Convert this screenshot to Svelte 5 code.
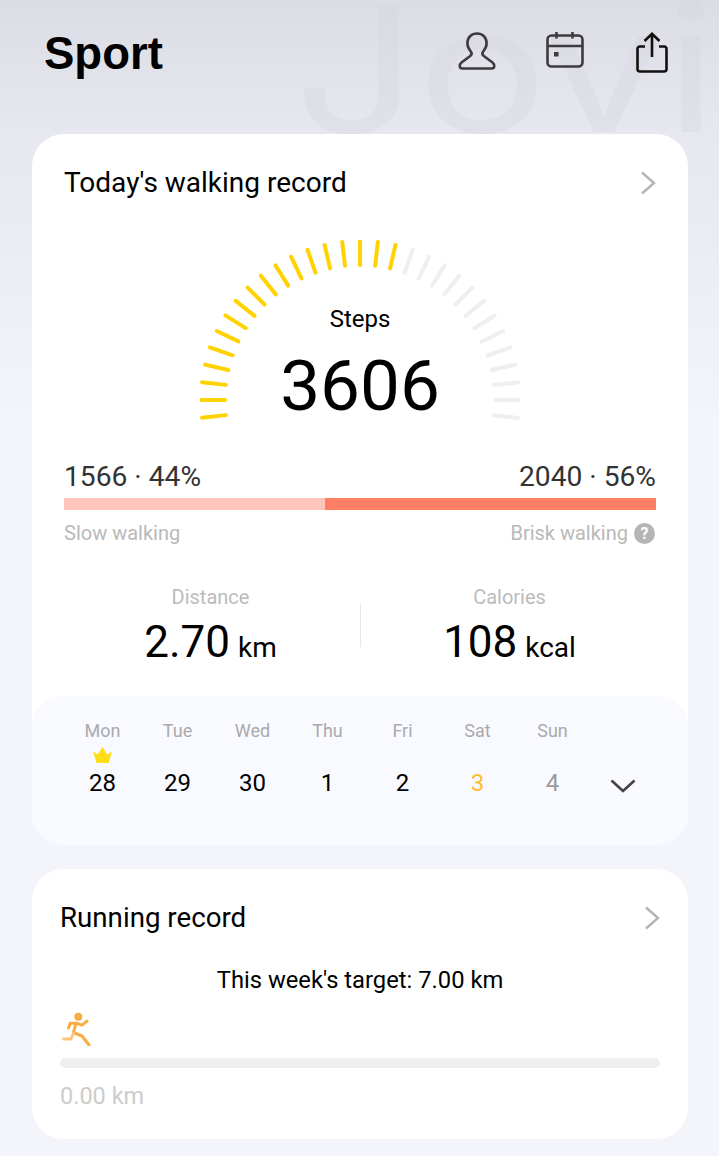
<script>
	const total = 31;
	const filled = 18;
	const cx = 160;
	const cy = 160;
	const ticks = Array.from({ length: total }, (_, i) => {
		const a = ((-6.43 + i * 6.43) * Math.PI) / 180;
		return {
			x1: cx - 159 * Math.cos(a),
			y1: cy - 159 * Math.sin(a),
			x2: cx - 135 * Math.cos(a),
			y2: cy - 135 * Math.sin(a),
			on: i < filled
		};
	});

	const days = [
		{ label: 'Mon', num: '28', crown: true },
		{ label: 'Tue', num: '29' },
		{ label: 'Wed', num: '30' },
		{ label: 'Thu', num: '1' },
		{ label: 'Fri', num: '2' },
		{ label: 'Sat', num: '3', kind: 'today' },
		{ label: 'Sun', num: '4', kind: 'future' }
	];
</script>

<main class="page">
	<div class="watermark" aria-hidden="true">Jovi</div>

	<header class="header">
		<h1>Sport</h1>
		<div class="actions">
			<svg width="38" height="38" viewBox="0 0 38 38" fill="none" stroke="#3c3c3e" stroke-width="2.6">
				<path d="M19 1.500c-5.800 0-9.600 4-9.600 9.800 0 3.600 1.700 6.200 3.400 8.200 1.200 1.500 1 3.200-.6 4.500L3.500 30.500c-2.600 2.200-2.400 6 1 6h29c3.400 0 3.600-3.800 1-6l-8.700-6.500c-1.600-1.300-1.800-3-.6-4.500 1.700-2 3.400-4.600 3.400-8.200 0-5.800-3.800-9.800-9.600-9.800z" />
			</svg>
			<svg width="38" height="36" viewBox="0 0 38 36" fill="none" stroke="#3c3c3e" stroke-width="2.6">
				<rect x="1.500" y="3.500" width="35" height="31" rx="4" />
				<path d="M1.500 14h35M10.500 0v6.500M26.500 0v6.500" />
				<rect x="8" y="20" width="4.500" height="4.500" fill="#3c3c3e" stroke="none" />
			</svg>
			<svg class="ic-share" width="32" height="41" viewBox="0 0 32 41" fill="none" stroke="#111" stroke-width="2.6">
				<path d="M9 14.500H4c-1.500 0-2.500 1-2.500 2.500v20c0 1.500 1 2.500 2.500 2.500h24c1.500 0 2.500-1 2.500-2.500V17c0-1.500-1-2.500-2.500-2.500h-5" />
				<path d="M16 25V2M8.500 9 16 1.800 23.500 9" />
			</svg>
		</div>
	</header>

	<section class="card walking">
		<div class="title-row">
			<h2>Today's walking record</h2>
			<svg width="16" height="24" viewBox="0 0 16 24" fill="none" stroke="#b4b4b4" stroke-width="2.400"><path d="M2 1.500 14 12 2 22.500" /></svg>
		</div>

		<div class="gauge">
			<svg width="320" height="180" viewBox="0 0 320 180">
				{#each ticks as t}
					<line x1={t.x1} y1={t.y1} x2={t.x2} y2={t.y2} stroke={t.on ? '#ffd200' : '#eeeef3'} stroke-width="4" stroke-linecap="round" />
				{/each}
			</svg>
			<div class="gauge-text">
				<div class="steps-label">Steps</div>
				<div class="steps">3606</div>
			</div>
		</div>

		<div class="split">
			<div class="split-nums"><span>1566 · 44%</span><span>2040 · 56%</span></div>
			<div class="split-bar">
				<div class="slow" style="width: 44.1%"></div>
				<div class="brisk"></div>
			</div>
			<div class="split-labels">
				<span>Slow walking</span>
				<span class="brisk-label">Brisk walking <i class="help">?</i></span>
			</div>
		</div>

		<div class="stats">
			<div class="stat">
				<div class="stat-label">Distance</div>
				<div class="stat-value">2.70 <small>km</small></div>
			</div>
			<div class="divider"></div>
			<div class="stat">
				<div class="stat-label">Calories</div>
				<div class="stat-value">108 <small>kcal</small></div>
			</div>
		</div>

		<div class="week">
			{#each days as d}
				<div class="day {d.kind ?? ''}">
					<div class="day-label">{d.label}</div>
					<div class="crown">
						{#if d.crown}
							<svg width="19" height="16" viewBox="0 0 19 16"><path d="M3.500 16 0 4.500l4.800 3L9.500 0l4.700 7.500 4.800-3L15.500 16z" fill="#ffdd17" /></svg>
						{/if}
					</div>
					<div class="day-num">{d.num}</div>
				</div>
			{/each}
			<div class="week-more">
				<svg width="26" height="14" viewBox="0 0 26 14" fill="none" stroke="#444" stroke-width="2.600"><path d="M1.500 1.500 13 12 24.500 1.500" /></svg>
			</div>
		</div>
	</section>

	<section class="card running">
		<div class="title-row">
			<h2>Running record</h2>
			<svg width="16" height="24" viewBox="0 0 16 24" fill="none" stroke="#b4b4b4" stroke-width="2.400"><path d="M2 1.500 14 12 2 22.500" /></svg>
		</div>
		<p class="target">This week's target: 7.00 km</p>
		<svg class="runner" width="30" height="34" viewBox="0 0 30 34" fill="none" stroke-linecap="round" stroke-linejoin="round">
			<circle cx="16.300" cy="4.700" r="4" fill="#f9ab44" />
			<path d="M6.500 16l1.800-4.800H14l6 2 5-4M14 11.200 11.500 20.500l8.500 3.500 7 9" stroke="#f9ab44" stroke-width="3" />
			<path d="M11.500 21 9 27H1.500" stroke="#fcc47c" stroke-width="2.800" />
		</svg>
		<div class="track"></div>
		<div class="km">0.00 km</div>
	</section>
</main>

<style>
	:global(body) {
		margin: 0;
	}

	.page {
		position: relative;
		width: 719px;
		height: 1156px;
		overflow: hidden;
		font-family: Roboto, sans-serif;
		background: linear-gradient(180deg, #dcdce5 0, #e6e7ef 130px, #f4f5fa 420px);
		color: #000;
	}

	.watermark {
		position: absolute;
		left: 294px;
		top: 0;
		font-family: 'Inter', sans-serif;
		font-size: 176px;
		line-height: 136px;
		transform: scaleX(1.23);
		transform-origin: left top;
		color: #d6d6dd;
		opacity: 0.34;
	}

	.header {
		position: relative;
		display: flex;
		justify-content: space-between;
		align-items: flex-start;
		height: 134px;
		padding: 0 51px 0 44px;
		box-sizing: border-box;
	}

	h1 {
		margin: 27px 0 0;
		font-family: 'Liberation Sans', sans-serif;
		font-size: 45.500px;
		line-height: 54px;
		font-weight: 700;
	}

	.actions {
		display: flex;
		align-items: flex-start;
		gap: 50px;
		padding-top: 32px;
	}

	.ic-share {
		margin-left: 2px;
	}

	.card {
		position: relative;
		margin: 0 31px 24px 32px;
		background: #fff;
		border-radius: 32px;
	}

	.title-row {
		display: flex;
		justify-content: space-between;
		align-items: center;
		padding: 31px 32px 0;
		height: 36px;
	}

	h2 {
		margin: 0;
		font-size: 28px;
		line-height: 36px;
		font-weight: 400;
	}

	.gauge {
		position: relative;
		width: 320px;
		height: 180px;
		margin: 39px auto 0;
	}

	.gauge svg {
		display: block;
	}

	.gauge-text {
		position: absolute;
		left: 0;
		right: 0;
		top: 64px;
		text-align: center;
	}

	.steps-label {
		font-size: 24px;
		line-height: 30px;
	}

	.steps {
		font-size: 71px;
		line-height: 84px;
		margin-top: 10px;
	}

	.split {
		padding: 41px 32px 0;
	}

	.split-nums,
	.split-labels {
		display: flex;
		justify-content: space-between;
	}

	.split-nums {
		font-size: 28.200px;
		line-height: 32px;
		color: #333;
	}

	.split-bar {
		display: flex;
		height: 12px;
		margin-top: 5px;
	}

	.slow {
		background: #ffc4bb;
	}

	.brisk {
		flex: 1;
		background: #ff7f66;
	}

	.split-labels {
		margin-top: 10px;
		font-size: 20px;
		line-height: 26px;
		color: #b9b9b9;
	}

	.brisk-label {
		display: flex;
		align-items: center;
		gap: 6px;
	}

	.help {
		width: 21px;
		height: 21px;
		margin-right: 1px;
		border-radius: 50%;
		background: #b5b5b5;
		color: #fff;
		font-size: 16px;
		line-height: 21px;
		font-style: normal;
		font-weight: 700;
		text-align: center;
	}

	.stats {
		display: grid;
		grid-template-columns: 1fr 1px 1fr;
		align-items: start;
		width: 597px;
		margin: 38px auto 0;
	}

	.stat {
		text-align: center;
		white-space: nowrap;
	}

	.stat-label {
		font-size: 20px;
		line-height: 26px;
		color: #bbb;
	}

	.stat-value {
		margin-top: 5px;
		font-size: 44px;
		line-height: 54px;
	}

	.stat-value small {
		margin-left: -3px;
		font-size: 28px;
	}

	.divider {
		width: 1px;
		height: 43px;
		margin-top: 20px;
		background: #e6e6e6;
	}

	.week {
		display: grid;
		grid-template-columns: repeat(7, 75px) 1fr;
		margin-top: 21px;
		height: 149px;
		box-sizing: border-box;
		padding: 24px 0 0 33px;
		background: #f9faff;
		border-radius: 32px;
	}

	.day {
		text-align: center;
	}

	.day-label {
		font-size: 18px;
		line-height: 22px;
		color: #aaa;
	}

	.crown {
		height: 16px;
		margin-top: 5px;
	}

	.crown svg {
		display: block;
		margin: 0 auto;
	}

	.day-num {
		font-size: 24px;
		line-height: 30px;
		margin-top: 5px;
	}

	.today .day-num {
		color: #ffbd2e;
	}

	.future .day-num {
		color: #999;
	}

	.week-more {
		padding: 59px 0 0 20px;
	}

	.week-more svg {
		display: block;
	}

	.running {
		height: 270px;
		margin-bottom: 0;
	}

	.running .title-row {
		padding: 31px 28px 0;
	}

	.running h2 {
		font-size: 27.700px;
	}

	.target {
		margin: 29px 0 0;
		font-size: 23.750px;
		line-height: 30px;
		text-align: center;
		color: #000;
	}

	.runner {
		display: block;
		margin: 17px 0 0 30px;
	}

	.track {
		height: 10px;
		margin: 12px 28px 0;
		border-radius: 5px;
		background: #efefef;
	}

	.km {
		margin: 13px 28px 0;
		font-size: 23.500px;
		line-height: 30px;
		color: #ccc;
	}
</style>
